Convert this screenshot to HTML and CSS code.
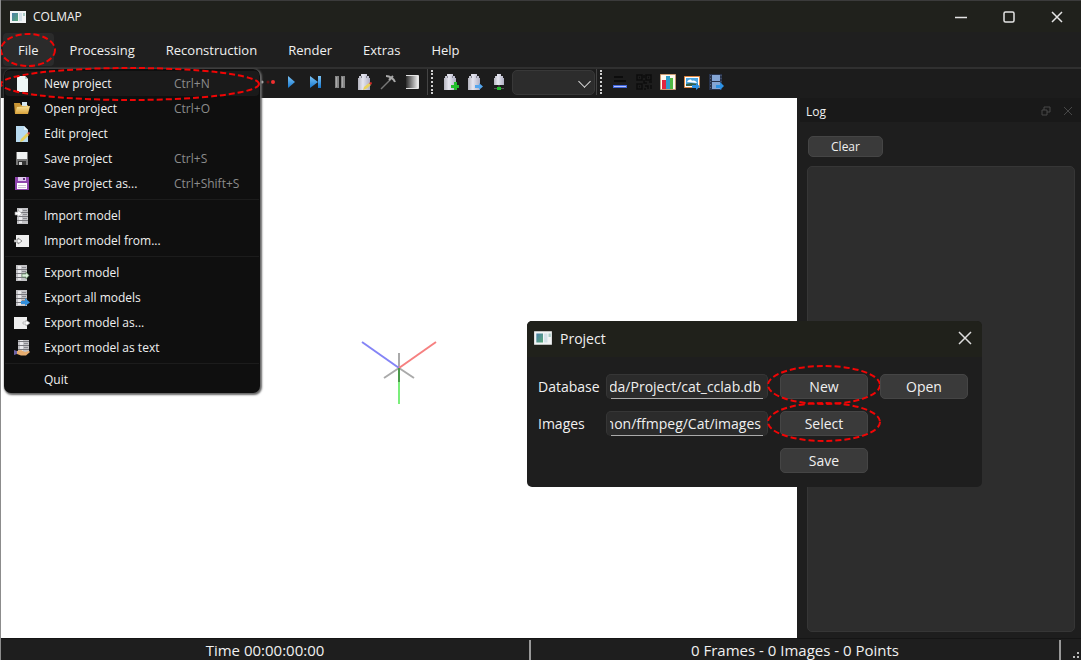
FILE: index.html
```html
<!DOCTYPE html>
<html lang="en">
<head>
<meta charset="utf-8">
<title>COLMAP</title>
<link rel="stylesheet" href="styles.css">
</head>
<body>
<svg class="defs" aria-hidden="true">
  <defs>
    <linearGradient id="steel" x1="0" x2="1"><stop offset="0" stop-color="#b4b4be"/><stop offset=".4" stop-color="#e6e6f0"/><stop offset="1" stop-color="#b0b0c4"/></linearGradient>
    <linearGradient id="blue" x1="0" y1="0" x2="0" y2="1"><stop offset="0" stop-color="#7cc4f6"/><stop offset="1" stop-color="#1577cf"/></linearGradient>
    <linearGradient id="gray" x1="0" x2="1"><stop offset="0" stop-color="#2c2c2c"/><stop offset="1" stop-color="#ffffff"/></linearGradient>
    <linearGradient id="teal" x1="0" y1="0" x2="1" y2="1"><stop offset="0" stop-color="#4a7fa8"/><stop offset="1" stop-color="#5aa878"/></linearGradient>
    <linearGradient id="gold" x1="0" y1="0" x2="0" y2="1"><stop offset="0" stop-color="#fbe49a"/><stop offset="1" stop-color="#d9a23a"/></linearGradient>
    <symbol id="app" viewBox="0 0 18 16"><path fill="#f2f4f5" d="M1 2h16v12H1z"/><path fill="url(#teal)" d="M3 4h6v8H3z"/><path fill="#d3e1e8" d="M10 4h3v8h-3z"/><path fill="#a8ccc4" d="M14 4h2v3h-2z"/></symbol>
    <symbol id="server" viewBox="0 0 16 16"><path fill="#c3c3c6" d="M4 0h11v16H4z"/><path fill="#e9e9ec" d="M6 1h3v14H6z"/><path stroke="#77777c" d="M4 4.500h11M4 8.500h11M4 12.500h11"/><path stroke="#8a8a90" d="M10 2.500h4M10 6.500h4M10 10.500h4"/></symbol>
    <symbol id="part" viewBox="0 0 16 16"><path fill="url(#steel)" d="M5 0h6v2h2v2h1v12H2V4h1V2h2z"/><path fill="#8e8e9c" d="M5 2h1v2H5zM10 2h1v2h-1z"/></symbol>
  </defs>
</svg>

<div class="window">
  <header class="titlebar">
    <svg class="app-icon" viewBox="0 0 18 16"><use href="#app"/></svg>
    <h1 class="title">COLMAP</h1>
    <div class="controls">
      <button class="control" aria-label="Minimize"><svg viewBox="0 0 12 12"><path d="M0 6.500h12"/></svg></button>
      <button class="control" aria-label="Maximize"><svg viewBox="0 0 12 12"><rect x="1" y="1" width="10" height="10" rx="1.500"/></svg></button>
      <button class="control" aria-label="Close"><svg viewBox="0 0 12 12"><path d="M1 1l10 10M11 1L1 11"/></svg></button>
    </div>
  </header>

  <nav class="menubar">
    <button class="menu-title active">File<svg class="mark mark-file" viewBox="0 0 56 34"><ellipse cx="28" cy="17" rx="27" ry="16"/></svg></button>
    <button class="menu-title">Processing</button>
    <button class="menu-title">Reconstruction</button>
    <button class="menu-title">Render</button>
    <button class="menu-title">Extras</button>
    <button class="menu-title">Help</button>

    <div class="menu">
      <button class="item current"><svg viewBox="0 0 16 16"><path fill="#eef6f6" d="M3 0h8l3 3v13H3z"/><path fill="#b9cfd0" d="M11 0v3h3z"/></svg><span>New project</span><kbd>Ctrl+N</kbd>
        <svg class="mark mark-new-project" viewBox="0 0 262 34"><ellipse cx="131" cy="17" rx="129" ry="16"/></svg></button>
      <button class="item"><svg viewBox="0 0 16 16"><path fill="#c99534" d="M0 2h6l1 2h7v9H1z"/><path fill="#d5e6ef" d="M8 1h5v4H8z"/><path fill="url(#gold)" d="M3 6l13-1-2 8H1z"/></svg><span>Open project</span><kbd>Ctrl+O</kbd></button>
      <button class="item"><svg viewBox="0 0 16 16"><path fill="#b8daf0" d="M2 0h8l4 4v12H2z"/><path fill="#e5f2fb" d="M10 0v4h4z"/><path fill="#e8d05a" d="M13 7l2 2-6 6-3 1 1-3z"/><path fill="#d34b43" d="M13 7l2-1 1 1-1 2z"/></svg><span>Edit project</span><kbd></kbd></button>
      <button class="item"><svg viewBox="0 0 16 16"><path fill="#777" d="M2 1h12v13H2z"/><path fill="#f1f3f3" d="M3 1h10v7H3z"/><path fill="#333" d="M4 10h8v4H4z"/><path fill="#ccc" d="M5 11h3v3H5z"/></svg><span>Save project</span><kbd>Ctrl+S</kbd></button>
      <button class="item"><svg viewBox="0 0 16 16"><path fill="#8e44ad" d="M1 1h14v13H1z"/><path fill="#dfc8ee" d="M4 1h8v4H4z"/><path fill="#5c2d79" d="M9 2h2v2H9z"/><path fill="#fff" d="M3 7h10v6H3z"/><path stroke="#cfc2d6" d="M4 9.500h8M4 11.500h8"/></svg><span>Save project as...</span><kbd>Ctrl+Shift+S</kbd></button>
      <hr class="rule">
      <button class="item"><svg viewBox="0 0 16 16"><use href="#server" x="-1"/><path fill="#fff" stroke="#999" stroke-width=".6" d="M1 4h3V2l4 3.500L4 9V7H1z"/></svg><span>Import model</span><kbd></kbd></button>
      <button class="item"><svg viewBox="0 0 16 16"><path fill="#eee" d="M2 2h13v12H2z"/><path fill="#fff" stroke="#777" stroke-width=".8" d="M0 7h4V5l4 3-4 3V9H0z"/></svg><span>Import model from...</span><kbd></kbd></button>
      <hr class="rule">
      <button class="item"><svg viewBox="0 0 16 16"><use href="#server" x="-2"/><path fill="#dcefdc" stroke="#568056" stroke-width=".6" d="M8 9h4V7l3 3.500-3 3.500v-2H8z"/></svg><span>Export model</span><kbd></kbd></button>
      <button class="item"><svg viewBox="0 0 16 16"><use href="#server" x="-2"/><path fill="#318fdc" d="M7 11h4V8l5 4.500-5 3.500v-2H7z"/></svg><span>Export all models</span><kbd></kbd></button>
      <button class="item"><svg viewBox="0 0 16 16"><path fill="#eee" d="M0 2h13v12H0z"/><path fill="#fff" stroke="#999" stroke-width=".6" d="M9 7h3V5l4 3-4 3V9H9z"/></svg><span>Export model as...</span><kbd></kbd></button>
      <button class="item"><svg viewBox="0 0 16 16"><use href="#server" x="0" y="-3"/><path fill="#e6ad70" d="M3 11l4-1 4 2 4-1 1 1-4 3.500H7L3 14z"/><path fill="#6c63a8" d="M0 10l3 1v3l-3 1z"/></svg><span>Export model as text</span><kbd></kbd></button>
      <hr class="rule">
      <button class="item"><svg viewBox="0 0 16 16"></svg><span>Quit</span><kbd></kbd></button>
    </div>
  </nav>

  <div class="toolbar">
    <div class="tools tools-first">
      <button class="tool" aria-label="Reconstruction options"><svg viewBox="0 0 16 16"><circle cx="2" cy="8" r="1.500" fill="#bbb"/><circle cx="8" cy="8" r="1.500" fill="#6b1010"/><circle cx="13" cy="8" r="2" fill="#f03030"/></svg></button>
      <button class="tool" aria-label="Start"><svg viewBox="0 0 16 16"><path fill="url(#blue)" d="M4 2l7 6-7 6z"/></svg></button>
      <button class="tool" aria-label="Step"><svg viewBox="0 0 16 16"><path fill="url(#blue)" d="M2 2l8 6-8 6zM10 2h3v12h-3z"/></svg></button>
      <button class="tool" aria-label="Pause"><svg viewBox="0 0 16 16"><path fill="#858585" d="M3 2h4v12H3zM9 2h4v12H9z"/><path fill="#aaa" d="M4 3h1v10H4zM10 3h1v10h-1z"/></svg></button>
      <button class="tool" aria-label="Edit"><svg viewBox="0 0 16 16"><use href="#part"/><path fill="#e9d25c" d="M13 9l2 2-5 4-3 1 1-3z"/><path fill="#d82929" d="M13 9l2-1 1 1-1 2z"/></svg></button>
      <button class="tool" aria-label="Mesh"><svg viewBox="0 0 16 16" fill="none"><path stroke="#777" stroke-width="1.500" d="M1 15L11 5"/><path stroke="#a9a9a9" stroke-width="2" d="M6 2c4 0 8 3 9 6M9 6l4-4"/></svg></button>
      <button class="tool" aria-label="Render options"><svg viewBox="0 0 16 16"><path fill="url(#gray)" d="M2 2h13v12H2z"/><path fill="none" stroke="#e4e4e4" d="M2 1.500h12.500v13H2"/></svg></button>
    </div>
    <div class="tools tools-model">
      <button class="tool" aria-label="Add"><svg viewBox="0 0 16 16"><use href="#part" x="-1"/><path fill="#22bd2c" d="M8 11h3V8h3v3h2v3h-2v2h-3v-2H8z"/></svg></button>
      <button class="tool" aria-label="Next"><svg viewBox="0 0 16 16"><use href="#part" x="-1"/><path fill="#55a6ee" d="M8 11h4V9l4 3.500-4 3.500v-2H8z"/></svg></button>
      <button class="tool" aria-label="Match"><svg viewBox="0 0 16 16"><path fill="url(#steel)" d="M6 0h4v2h2v2h1v7H3V4h1V2h2z"/><path stroke="#555" d="M3 14.500h10M8 11v2"/><path fill="#1fbd2c" d="M6 13h4v3H6z"/></svg></button>
      <select class="picker" aria-label="Model"><option></option></select>
    </div>
    <div class="tools tools-info">
      <button class="tool" aria-label="Log"><svg viewBox="0 0 16 16"><path stroke="#0c0c0c" stroke-width="2" d="M2 3h9M2 7h12"/><path fill="#3e63d8" d="M1 11h14v3H1z"/><path fill="#b4c2ff" d="M2 12h12v1H2z"/></svg></button>
      <button class="tool" aria-label="Match matrix"><svg viewBox="0 0 16 16" fill="none" stroke="#0c0c0c" stroke-width="1.500"><path d="M1 1h5v5H1zM10 1h5v5h-5zM1 10h5v5H1zM3 3.500h1M12 3.500h1M3 12.500h1M8 1v3M8 6v3h3M13 8h3M9 12h3v3M15 11v4M8 15h2"/></svg></button>
      <button class="tool" aria-label="Statistics"><svg viewBox="0 0 16 16"><path fill="#fff8ee" stroke="#c99b73" d="M.5.5h15v15H.5z"/><path fill="#e3263c" d="M2 6h4v9H2z"/><path fill="#2e9ec9" d="M6 2h4v13H6z"/><path fill="#51b843" d="M10 4h3v11h-3z"/></svg></button>
      <button class="tool" aria-label="Grab image"><svg viewBox="0 0 16 16"><path fill="#fff" stroke="#e08741" d="M.5 2.500h15v11H.5z"/><path fill="#4ba5e2" d="M2 4h12v8H2z"/><path fill="#fff" d="M3 8c2-3 4-3 5-1 2-1 4 0 5 2z"/><path fill="#35604a" d="M2 12v-2l5-1 7 1v2z"/><path fill="#2d92e5" d="M8 11h4V9l4 3.500-4 3.500v-2H8z"/></svg></button>
      <button class="tool" aria-label="Grab movie"><svg viewBox="0 0 16 16"><path fill="#27324a" d="M1 0h13v16H1z"/><path fill="#84a5d4" d="M4 1h8v6H4zM4 8h8v7H4z"/><path stroke="#56627c" stroke-dasharray="1 2" d="M2.500 1v14M13 1v14"/><path fill="#2d92e5" d="M8 11h4V8l4 4-4 4v-2H8z"/></svg></button>
    </div>
  </div>

  <main class="workspace">
    <section class="viewport" aria-label="Model viewer">
      <svg class="axes" viewBox="0 0 80 80"><g stroke-width="2"><path stroke="#aaa" d="M40 40V25M40 40l-15 10M40 40l15 10"/><path stroke="#8484f6" d="M40 40L3 14"/><path stroke="#f68080" d="M40 40l37-26"/><path stroke="#7bee7b" d="M40 40v36"/><path stroke="#4a9a4a" d="M40 40v14"/></g></svg>
    </section>
    <aside class="dock">
      <div class="dock-title">
        <h2 class="dock-name">Log</h2>
        <button class="dock-button" aria-label="Float"><svg viewBox="0 0 10 10"><path d="M1 4h5v5H1zM3 4V1h6v5H6"/></svg></button>
        <button class="dock-button" aria-label="Close log"><svg viewBox="0 0 10 10"><path d="M1 1l8 8M9 1L1 9"/></svg></button>
      </div>
      <div class="dock-body">
        <button class="push clear">Clear</button>
        <textarea class="log" aria-label="Log output" readonly></textarea>
      </div>
    </aside>
  </main>

  <footer class="statusbar">
    <span class="status">Time 00:00:00:00</span>
    <span class="status">0 Frames - 0 Images - 0 Points</span>
    <svg class="grip" viewBox="0 0 20 20"><path fill="#bbb" d="M16 12h2v2h-2zM12 16h2v2h-2zM16 16h2v2h-2z"/></svg>
  </footer>

  <section class="dialog" role="dialog" aria-labelledby="dialog-name">
    <div class="dialog-title">
      <svg class="app-icon dialog-icon" viewBox="0 0 18 16"><use href="#app"/></svg>
      <h2 class="dialog-name" id="dialog-name">Project</h2>
      <button class="dialog-close" aria-label="Close project"><svg viewBox="0 0 12 12"><path d="M0 0l12 12M12 0L0 12"/></svg></button>
    </div>
    <form class="form">
      <label for="database">Database</label>
      <input class="field" id="database" type="text" value="nda/Project/cat_cclab.db">
      <button class="push" type="button">New<svg class="mark mark-button" viewBox="0 0 114 40"><ellipse cx="57" cy="20" rx="56" ry="19"/></svg></button>
      <button class="push" type="button">Open</button>
      <label class="second" for="images">Images</label>
      <input class="field" id="images" type="text" value="non/ffmpeg/Cat/images">
      <button class="push" type="button">Select<svg class="mark mark-button" viewBox="0 0 114 40"><ellipse cx="57" cy="20" rx="56" ry="19"/></svg></button>
      <button class="push save" type="button">Save</button>
    </form>
  </section>
</div>
</body>
</html>
```
FILE: styles.css
```css
* { box-sizing: border-box; }

body {
  margin: 0;
  background: #1e1e1e;
  color: #f0f0f0;
  font-family: "Open Sans", "Noto Sans", sans-serif;
  font-size: 12px;
}

button, input, select, textarea, kbd { font: inherit; color: inherit; }
button { border: 0; padding: 0; background: none; }
h1, h2 { margin: 0; font-weight: 400; }
.defs { position: absolute; width: 0; height: 0; }

.window {
  position: relative;
  display: flex;
  flex-direction: column;
  height: 100vh;
  overflow: hidden;
  border-left: 1px solid #8c8c8c;
}

.titlebar {
  display: flex;
  align-items: center;
  height: 32px;
  flex: none;
  padding-left: 8px;
  background: #20211c;
  border-top: 1px solid #3b3b3b;
}
.app-icon { width: 18px; height: 16px; }
.title { margin-left: 6px; font-size: 12px; }
.controls { display: flex; margin-left: auto; }
.control { display: grid; place-items: center; width: 48px; height: 30px; }
.control svg { width: 12px; height: 12px; fill: none; stroke: #e4e4e4; stroke-width: 1.5; }

.menubar {
  position: relative;
  z-index: 2;
  display: flex;
  flex: none;
  gap: 1px;
  height: 35px;
  padding: 1px 2px;
  background: #1f1f1f;
}
.menu-title { position: relative; padding: 0 15px; font-size: 13px; border-radius: 4px; }
.menu-title.active { background: #2b2b2b; }

.menu {
  position: absolute;
  top: 37px;
  left: 3px;
  width: 256px;
  padding: 2px 1px 1px;
  background: #0f0f0f;
  border-radius: 7px;
  box-shadow: 1px 1px 2px 1px #666;
}
.item {
  position: relative;
  display: grid;
  grid-template-columns: 16px 116px 1fr;
  gap: 14px;
  align-items: center;
  width: 100%;
  height: 25px;
  padding-left: 9px;
  text-align: left;
}
.item > svg:first-child { width: 16px; height: 16px; }
.item span, .item kbd { white-space: nowrap; }
.item.current { background: #1a1a1a; border-radius: 4px; }
.item kbd { color: #8c8c8c; }
.rule { height: 1px; margin: 3px 0; border: 0; background: #1c1c1c; }

.mark { position: absolute; fill: none; stroke: #f00505; stroke-width: 2; stroke-dasharray: 6 3; pointer-events: none; }
.mark-file { left: -3px; top: 0; width: 56px; height: 34px; }
.mark-new-project { left: -6px; top: -4px; width: 262px; height: 34px; }
.mark-button { left: -14px; top: -10px; width: 114px; height: 40px; }

.toolbar {
  display: flex;
  flex: none;
  height: 31px;
  padding: 0 0 3px 255px;
  border-top: 2px solid #303030;
  background: #1c1c1c;
}
.tools { display: flex; align-items: center; }
.tools-first { padding-right: 3px; }
.tool { display: grid; place-items: center; width: 24px; height: 24px; }
.tool svg { width: 16px; height: 16px; }
.tools-model, .tools-info { border-left: 1px solid #444; }
.tools-model::before, .tools-info::before {
  content: "";
  height: 24px;
  margin: 0 6px 0 3px;
  border-left: 2px dotted #d0d0d0;
}
.picker {
  appearance: none;
  width: 83px;
  height: 25px;
  margin: 0 1px;
  border: 1px solid #383838;
  border-radius: 5px;
  background: #2c2c2c;
}
.tools-model { position: relative; }
.tools-model::after {
  content: "";
  position: absolute;
  right: 7px;
  top: 8px;
  width: 8px;
  height: 8px;
  border: solid #ddd;
  border-width: 0 1px 1px 0;
  transform: rotate(45deg);
}

.workspace { display: flex; flex: 1; min-height: 0; }
.viewport { display: grid; flex: 1; place-items: center; background: #fff; }
.axes { width: 80px; height: 80px; fill: none; }

.dock { display: flex; flex-direction: column; width: 284px; padding-left: 3px; background: #1e1e1e; }
.dock-title { display: flex; align-items: center; height: 24px; padding: 2px 6px 0; background: #191919; }
.dock-name { flex: 1; font-size: 12px; }
.dock-button { display: grid; place-items: center; width: 22px; height: 20px; }
.dock-button:last-child { width: 14px; margin-left: 4px; }
.dock-button svg { width: 10px; height: 10px; fill: none; stroke: #484848; }
.dock-body { display: flex; flex: 1; flex-direction: column; gap: 9px; padding: 14px 6px 6px 7px; }
.push {
  position: relative;
  height: 25px;
  border: 1px solid #454545;
  border-radius: 5px;
  background: #3a3a3a;
  font-size: 14px;
}
.push.clear { width: 75px; height: 21px; margin-left: 1px; font-size: 12px; }
.log { flex: 1; resize: none; border: 1px solid #363636; border-radius: 5px; background: #2d2d2d; }

.statusbar { display: flex; flex: none; height: 22px; padding-top: 1px; background: #1e1e1e; border-top: 1px solid #151515; }
.status { flex: 1; border-right: 2px solid #999; font-size: 15px; line-height: 20px; text-align: center; }
.grip { width: 20px; height: 20px; }

.dialog {
  position: absolute;
  z-index: 3;
  left: 526px;
  top: 321px;
  overflow: hidden;
  border-radius: 5px;
  background: #1e1e1e;
  font-size: 14px;
}
.dialog-title { display: flex; align-items: center; height: 36px; padding: 0 10px 2px 6px; background: #20211b; }
.dialog-icon { width: 20px; height: 18px; }
.dialog-name { flex: 1; margin-left: 7px; font-size: 14px; }
.dialog-close { display: grid; place-items: center; width: 14px; height: 24px; }
.dialog-close svg { width: 12px; height: 12px; overflow: visible; stroke: #ddd; stroke-width: 1.5; }
.form {
  display: grid;
  grid-template-columns: 56px 162px 88px 88px;
  gap: 12px;
  align-items: center;
  padding: 17px 14px 14px 11px;
}
.form label { white-space: nowrap; }
.second { grid-column: 1; }
.save { grid-column: 3; }
.field {
  width: 100%;
  height: 25px;
  padding: 0 6px 2px 3px;
  border: 1px solid #363636;
  border-bottom: 0;
  border-radius: 5px;
  background: linear-gradient(#aaa, #aaa) 50% 100% / 152px 1px no-repeat #2b2b2b;
  direction: rtl;
}
```
